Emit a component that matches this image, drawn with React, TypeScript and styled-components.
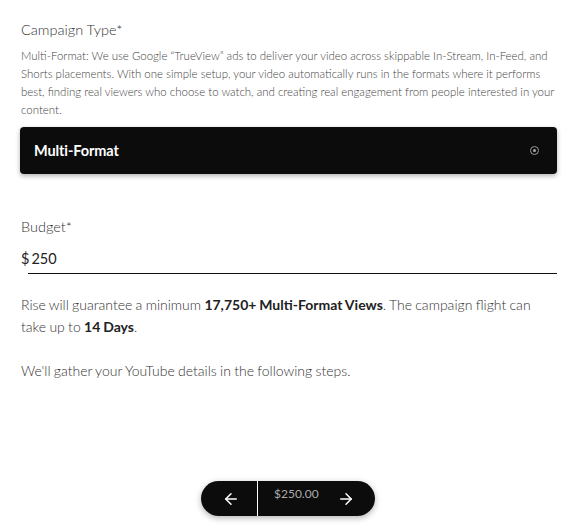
import React from "react";
import styled, { createGlobalStyle } from "styled-components";
import { ArrowLeft, ArrowRight } from "lucide-react";

const Global = createGlobalStyle`
  html, body { margin: 0; padding: 0; background: #fff; }
  body { font-family: Lato, "Open Sans", sans-serif; color: #333; }
`;

const Page = styled.div`
  padding: 20px 24px 0 20px;
  height: 529px;
  box-sizing: border-box;
`;

const Label = styled.div`
  font-size: 14.5px;
  font-weight: 300;
  color: #333;
  line-height: 20px;
  padding-left: 1px;
`;

const Description = styled.p`
  margin: 7px 0 0 1px;
  font-size: 11.45px;
  font-weight: 300;
  line-height: 18px;
  color: #444;
`;

const OptionCard = styled.div`
  margin-top: 8px;
  height: 47px;
  background: #0c0c0c;
  border-radius: 4px;
  box-shadow: 0 2px 5px rgba(0, 0, 0, 0.3);
  display: flex;
  align-items: center;
  justify-content: space-between;
  padding: 0 18px 0 14px;
  box-sizing: border-box;
`;

const OptionTitle = styled.span`
  color: #fff;
  font-size: 14.5px;
  font-weight: 700;
  letter-spacing: -0.1px;
`;

const RadioDot = styled.span`
  width: 7px;
  height: 7px;
  border-radius: 50%;
  border: 1px solid #999;
  display: flex;
  align-items: center;
  justify-content: center;
  &::after {
    content: "";
    width: 3px;
    height: 3px;
    border-radius: 50%;
    background: #aaa;
  }
`;

const BudgetBlock = styled.div`
  margin-top: 43px;
`;

const InputRow = styled.div`
  margin-top: 12px;
  display: flex;
  align-items: center;
  font-size: 14.5px;
  font-weight: 400;
  color: #222;
  line-height: 20px;
  padding-left: 1px;
`;

const Dollar = styled.span`
  margin-right: 2px;
`;

const Underline = styled.div`
  margin: 4px 0 0 8px;
  height: 1px;
  background: #111;
`;

const Text = styled.p<{ $top: number }>`
  margin: ${(p) => p.$top}px 0 0 1px;
  font-size: 14px;
  font-weight: 300;
  line-height: 22px;
  color: #333;
  word-spacing: -0.5px;
  b { font-weight: 700; color: #222; }
`;

const NavBar = styled.div`
  position: fixed;
  left: 201px;
  top: 481px;
  height: 35px;
  display: flex;
  border-radius: 18px;
  overflow: hidden;
  box-shadow: 0 2px 6px rgba(0, 0, 0, 0.3);
`;

const BackButton = styled.div`
  width: 57px;
  background: #0c0c0c;
  display: flex;
  align-items: center;
  justify-content: center;
  padding-left: 3px;
  box-sizing: border-box;
  border-right: 1px solid #fff;
`;

const NextButton = styled.div`
  width: 117px;
  background: #0c0c0c;
  display: flex;
  align-items: flex-start;
  justify-content: space-between;
  padding: 5px 20px 0 16px;
  box-sizing: border-box;
`;

const Price = styled.span`
  font-size: 12px;
  font-weight: 400;
  color: #aaa;
  line-height: 16px;
`;

const ArrowWrap = styled.span`
  display: flex;
  margin-top: 4px;
`;

export default function App() {
  return (
    <>
      <Global />
      <Page>
        <Label>Campaign Type*</Label>
        <Description>
          Multi-Format: We use Google “TrueView” ads to deliver your video across skippable In-Stream, In-Feed, and
          Shorts placements. With one simple setup, your video automatically runs in the formats where it performs
          best, finding real viewers who choose to watch, and creating real engagement from people interested in your
          content.
        </Description>
        <OptionCard>
          <OptionTitle>Multi-Format</OptionTitle>
          <RadioDot />
        </OptionCard>
        <BudgetBlock>
          <Label>Budget*</Label>
          <InputRow>
            <Dollar>$</Dollar>250
          </InputRow>
          <Underline />
        </BudgetBlock>
        <Text $top={20}>
          Rise will guarantee a minimum <b>17,750+ Multi-Format Views</b>. The campaign flight can take up to{" "}
          <b>14 Days</b>.
        </Text>
        <Text $top={22}>We'll gather your YouTube details in the following steps.</Text>
      </Page>
      <NavBar>
        <BackButton>
          <ArrowLeft size={18} color="#fff" strokeWidth={2} />
        </BackButton>
        <NextButton>
          <Price>$250.00</Price>
          <ArrowWrap>
            <ArrowRight size={18} color="#fff" strokeWidth={2} />
          </ArrowWrap>
        </NextButton>
      </NavBar>
    </>
  );
}
